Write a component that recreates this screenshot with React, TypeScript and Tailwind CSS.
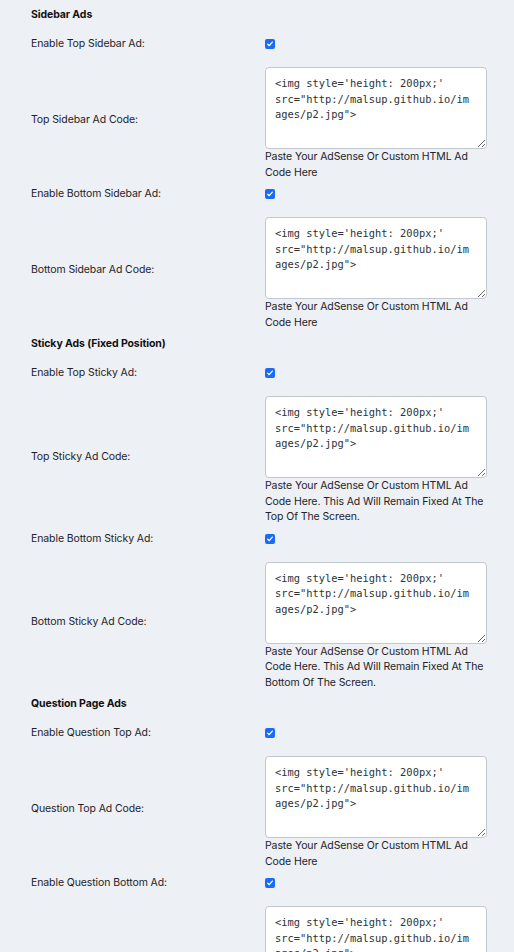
const code = `<img style='height: 200px;' src="http://malsup.github.io/images/p2.jpg">`;

const shortHelp = "Paste Your AdSense Or Custom HTML Ad Code Here";

const sections = [
  {
    title: "Sidebar Ads",
    rows: [
      { toggle: "Enable Top Sidebar Ad:", label: "Top Sidebar Ad Code:", help: shortHelp },
      { toggle: "Enable Bottom Sidebar Ad:", label: "Bottom Sidebar Ad Code:", help: shortHelp },
    ],
  },
  {
    title: "Sticky Ads (Fixed Position)",
    rows: [
      {
        toggle: "Enable Top Sticky Ad:",
        label: "Top Sticky Ad Code:",
        help: "Paste Your AdSense Or Custom HTML Ad Code Here. This Ad Will Remain Fixed At The Top Of The Screen.",
      },
      {
        toggle: "Enable Bottom Sticky Ad:",
        label: "Bottom Sticky Ad Code:",
        help: "Paste Your AdSense Or Custom HTML Ad Code Here. This Ad Will Remain Fixed At The Bottom Of The Screen.",
      },
    ],
  },
  {
    title: "Question Page Ads",
    rows: [
      { toggle: "Enable Question Top Ad:", label: "Question Top Ad Code:", help: shortHelp },
      { toggle: "Enable Question Bottom Ad:", label: "Question Bottom Ad Code:", help: shortHelp },
    ],
  },
];

function Checkbox() {
  return (
    <span className="flex h-[10px] w-[10px] items-center justify-center rounded-[2px] bg-[#1a6bf7]">
      <svg viewBox="0 0 10 10" className="h-[8px] w-[8px]" fill="none" aria-hidden="true">
        <path
          d="M2.2 5.3 4.1 7.1 7.9 2.6"
          stroke="white"
          strokeWidth="1.6"
          strokeLinecap="round"
          strokeLinejoin="round"
        />
      </svg>
    </span>
  );
}

export default function App() {
  return (
    <div className="h-[952px] overflow-hidden bg-[#edf0f5] pt-[4px] pr-[27px] pl-[31px] font-['Inter','Liberation_Sans',sans-serif] text-[10.5px] leading-[15.5px] tracking-[-0.1px] text-[#1d2327]">
      {sections.map((section) => (
        <div key={section.title}>
          <h3 className="pt-[3px] pb-[10.5px] font-bold text-[#111]">{section.title}</h3>
          {section.rows.map((row) => (
            <div key={row.toggle}>
              <div className="flex h-[22px] items-center">
                <div className="w-[234px] shrink-0">{row.toggle}</div>
                <Checkbox />
              </div>
              <div className="flex items-center pt-[12px] pb-[3px]">
                <div className="mb-[8px] w-[234px] shrink-0">{row.label}</div>
                <div className="w-[222px]">
                  <textarea
                    readOnly
                    defaultValue={code}
                    className="block h-[82px] w-[222px] rounded-[4px] border border-[#c3c7ce] bg-white pt-[8px] pr-[12px] pl-[9px] font-['DejaVu_Sans_Mono',monospace] text-[10.4px] leading-[15.5px] tracking-normal text-[#2c3338] outline-none"
                  />
                  <p>{row.help}</p>
                </div>
              </div>
            </div>
          ))}
        </div>
      ))}
    </div>
  );
}
